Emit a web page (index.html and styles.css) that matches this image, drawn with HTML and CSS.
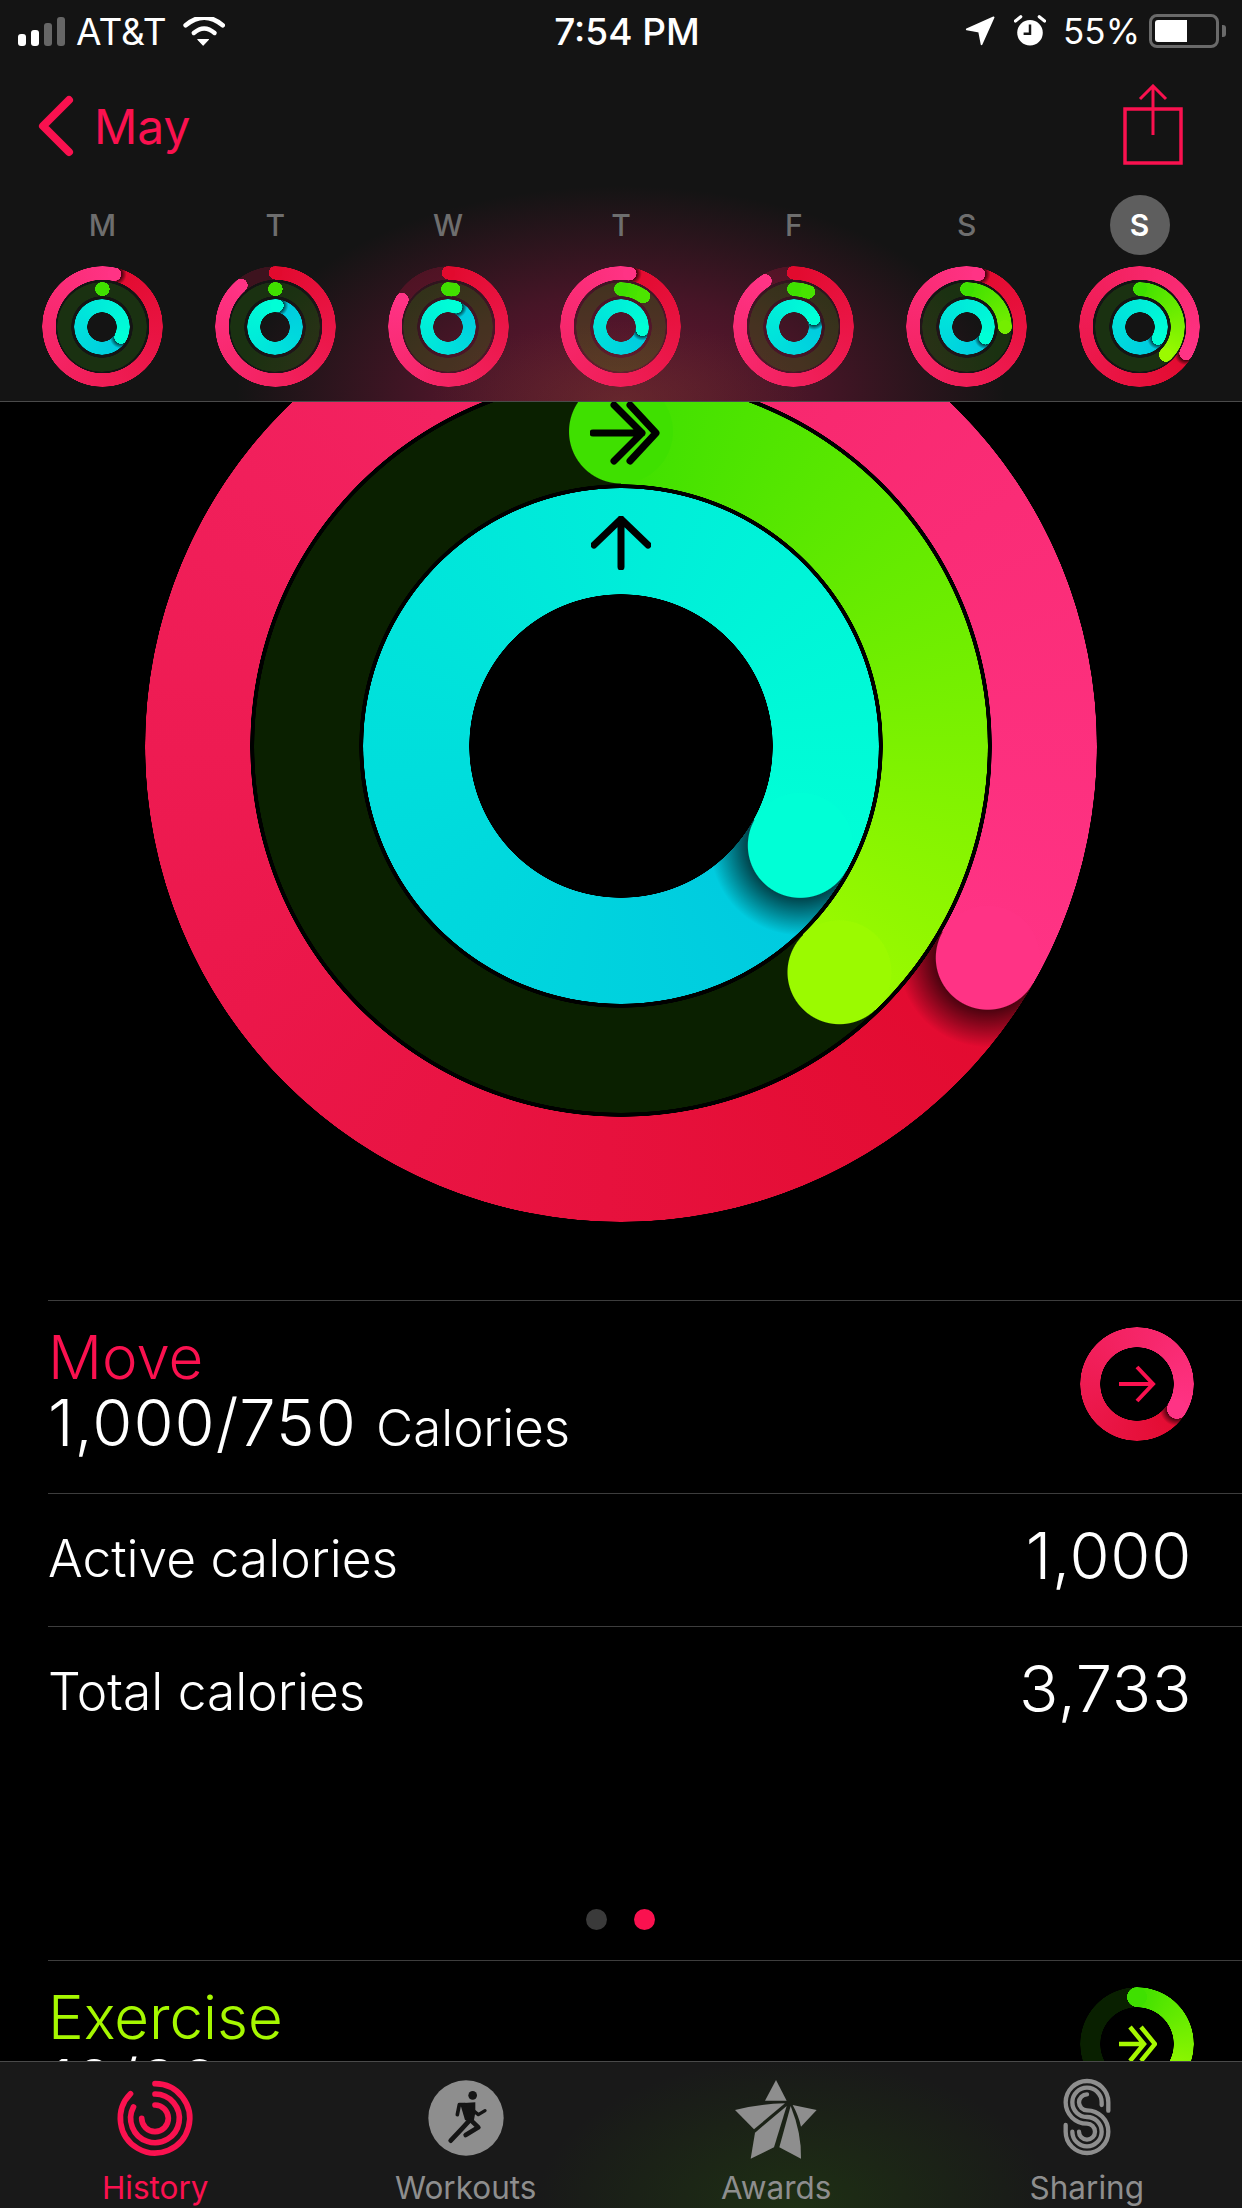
FILE: index.html
```html
<!DOCTYPE html>
<html lang="en">
<head>
  <meta charset="UTF-8">
  <meta name="viewport" content="width=device-width, initial-scale=1.0">
  <title>Activity</title>
  <link rel="stylesheet" href="styles.css">
</head>
<body>
<div class="phone">

  <header class="top">
    <div class="status">
      <div class="status-left">
        <svg class="signal" width="48" height="29" viewBox="0 0 48 29">
          <rect x="0" y="17" width="8" height="12" rx="3" fill="#fff"/>
          <rect x="13" y="13" width="8" height="16" rx="3" fill="#fff"/>
          <rect x="26" y="6" width="8" height="23" rx="3" fill="#666"/>
          <rect x="39" y="0" width="8" height="29" rx="3" fill="#666"/>
        </svg>
        <span>AT&amp;T</span>
        <svg class="wifi" width="42" height="29" viewBox="540 50 125 85">
          <path d="M548 74 Q603 28 658 74" fill="none" stroke="#fff" stroke-width="14" stroke-linecap="round"/>
          <path d="M572 97 Q603 70 634 97" fill="none" stroke="#fff" stroke-width="13" stroke-linecap="round"/>
          <path d="M584 116 H616 L600 133 Z" fill="#fff" stroke="#fff" stroke-width="3" stroke-linejoin="round"/>
        </svg>
      </div>
      <div class="status-time">7:54 PM</div>
      <div class="status-right">
        <svg width="30" height="30" viewBox="60 50 85 85">
          <path d="M65 88 L141 54 L107 130 L100 94 Z" fill="#fff" stroke="#fff" stroke-width="5" stroke-linejoin="round"/>
        </svg>
        <svg class="alarm" width="32" height="32" viewBox="205 45 90 90">
          <circle cx="250" cy="95" r="36" fill="#fff"/>
          <path d="M209 62 L224 50 M291 62 L276 50" stroke="#fff" stroke-width="9" stroke-linecap="round"/>
          <path d="M250 72 V98 H232" fill="none" stroke="#151515" stroke-width="7"/>
        </svg>
        <span class="pct">55%</span>
        <div class="battery"><div class="battery-fill"></div></div>
        <div class="battery-nub"></div>
      </div>
    </div>

    <nav class="nav">
      <div class="back">
        <svg width="37" height="62" viewBox="0 0 37 62">
          <path d="M32 5 L6 31 L32 57" fill="none" stroke="#fa114f" stroke-width="8" stroke-linecap="round" stroke-linejoin="round"/>
        </svg>
        <span>May</span>
      </div>
      <svg class="share" width="60" height="82" viewBox="0 0 60 82">
        <path d="M2 25 H58 V79 H2 Z" fill="none" stroke="#fa114f" stroke-width="3.5"/>
        <path d="M30 51 V2 M17 15 L30 2 L43 15" fill="none" stroke="#fa114f" stroke-width="3"/>
      </svg>
    </nav>

    <div class="week">
      <div class="day"><span class="letter">M</span>
        <div class="rings rings-sm">
          <div class="ring move lap" style="--a:13deg"></div>
          <div class="ring ex" style="--a:1deg;--c2:#40e000"></div>
          <div class="ring stand lap" style="--a:119deg"></div>
        </div>
      </div>
      <div class="day"><span class="letter">T</span>
        <div class="rings rings-sm">
          <div class="ring move" style="--a:320deg"></div>
          <div class="ring ex" style="--a:1deg;--c2:#40e000"></div>
          <div class="ring stand lap" style="--a:6deg"></div>
        </div>
      </div>
      <div class="day"><span class="letter">W</span>
        <div class="rings rings-sm">
          <div class="ring move" style="--a:300deg"></div>
          <div class="ring ex" style="--a:8deg;--c2:#42e000"></div>
          <div class="ring stand lap" style="--a:22deg"></div>
        </div>
      </div>
      <div class="day"><span class="letter">T</span>
        <div class="rings rings-sm">
          <div class="ring move lap" style="--a:10deg"></div>
          <div class="ring ex" style="--a:36deg;--c2:#4ce400"></div>
          <div class="ring stand lap" style="--a:97deg"></div>
        </div>
      </div>
      <div class="day"><span class="letter">F</span>
        <div class="rings rings-sm">
          <div class="ring move" style="--a:328deg"></div>
          <div class="ring ex" style="--a:22deg;--c2:#48e200"></div>
          <div class="ring stand lap" style="--a:68deg"></div>
        </div>
      </div>
      <div class="day"><span class="letter">S</span>
        <div class="rings rings-sm">
          <div class="ring move lap" style="--a:13deg"></div>
          <div class="ring ex" style="--a:90deg;--c2:#74ee00"></div>
          <div class="ring stand lap" style="--a:121deg"></div>
        </div>
      </div>
      <div class="day"><span class="letter today">S</span>
        <div class="rings rings-sm">
          <div class="ring move lap" style="--a:120deg"></div>
          <div class="ring ex" style="--a:137deg"></div>
          <div class="ring stand lap" style="--a:122deg"></div>
        </div>
      </div>
    </div>
  </header>

  <main class="content">
    <section class="hero">
      <div class="rings rings-lg">
        <div class="ring move lap" style="--a:120deg"></div>
        <div class="ring ex" style="--a:136deg"></div>
        <div class="ring stand lap" style="--a:119deg"></div>
        <svg class="arrow-ex" width="70" height="64" viewBox="0 0 70 64">
          <path d="M3 32 H52 M24 4 L52 32 L24 60 M40 4 L66 32 L40 60" fill="none" stroke="#000" stroke-width="7" stroke-linecap="round" stroke-linejoin="round"/>
        </svg>
        <svg class="arrow-stand" width="60" height="54" viewBox="0 0 60 54">
          <path d="M30 51 V3 M3 29 L30 3 L57 29" fill="none" stroke="#000" stroke-width="7" stroke-linecap="round" stroke-linejoin="round"/>
        </svg>
      </div>
    </section>

    <section class="stat">
      <div class="stat-text">
        <div class="stat-title title-move">Move</div>
        <div class="stat-value">1,000/750 <small>Calories</small></div>
      </div>
      <div class="rings rings-row">
        <div class="ring move lap" style="--a:122deg"></div>
        <svg class="arrow-row" width="40" height="40" viewBox="0 0 40 40">
          <path d="M2 20 H36 M20 3 L36 20 L20 37" fill="none" stroke="#fa114f" stroke-width="4"/>
        </svg>
      </div>
    </section>
    <div class="line"><span>Active calories</span><b>1,000</b></div>
    <div class="line"><span>Total calories</span><b>3,733</b></div>

    <div class="pager"><i></i><i class="on"></i></div>

    <section class="stat">
      <div class="stat-text">
        <div class="stat-title title-ex">Exercise</div>
        <div class="stat-value">12/30 <small>Minutes</small></div>
      </div>
      <div class="rings rings-row">
        <div class="ring ex" style="--a:136deg"></div>
        <svg class="arrow-row" width="40" height="40" viewBox="0 0 40 40">
          <path d="M2 20 H27 M13 3 L27 20 L13 37 M24 3 L38 20 L24 37" fill="none" stroke="#a6f800" stroke-width="4.5"/>
        </svg>
      </div>
    </section>
  </main>

  <footer class="tabs">
    <div class="tab tab-on">
      <svg viewBox="83 30 228 228">
        <g fill="none" stroke="#fa114f" stroke-width="17" stroke-linecap="round">
          <path d="M197 41 A104 104 0 1 1 123.5 71.5"/>
          <path d="M197 72 A73 73 0 1 1 132.5 110.8"/>
          <path d="M197 105 A40 40 0 1 1 157 145"/>
        </g>
      </svg>
      <span>History</span>
    </div>
    <div class="tab">
      <svg viewBox="54 30 228 228">
        <circle cx="168" cy="144" r="113" fill="#8e8e8e"/>
        <circle cx="188" cy="76" r="13" fill="#151515"/>
        <path d="M150 100 L196 97 L196 128 L190 160 L165 150 Z" fill="#151515"/>
        <g fill="none" stroke="#151515" stroke-linecap="round" stroke-linejoin="round">
          <path d="M165 104 H148 L142 134" stroke-width="11"/>
          <path d="M190 122 L205 134 L225 122" stroke-width="10"/>
          <path d="M178 152 L156 176 L122 212" stroke-width="14"/>
          <path d="M184 152 L205 172 L167 195" stroke-width="14"/>
        </g>
      </svg>
      <span>Workouts</span>
    </div>
    <div class="tab">
      <svg viewBox="54 30 228 228">
        <g fill="#8e8e8e">
          <path d="M168 30 L200 92 H135 Z"/>
          <path d="M45 120 Q110 102 195 100 L102 178 Z"/>
          <path d="M105 188 L200 108 L162 232 L92 266 Z"/>
          <path d="M212 108 L178 232 L243 266 Q245 190 212 108 Z"/>
          <path d="M218 105 L290 120 L243 170 Q235 135 218 105 Z"/>
        </g>
      </svg>
      <span>Awards</span>
    </div>
    <div class="tab">
      <svg viewBox="54 30 228 228">
        <g fill="none" stroke="#8e8e8e" stroke-width="13" stroke-linecap="round">
          <path d="M232 122 V97 A64 64 0 0 0 104 97 A64 64 0 0 0 168 161 A24 24 0 1 1 144 185"/>
          <path d="M212 105 V97 A44 44 0 0 0 124 97 A44 44 0 0 0 168 141 A44 44 0 1 1 124 185"/>
          <path d="M168 73 A24 24 0 0 0 168 121 A64 64 0 1 1 104 185 V165"/>
        </g>
      </svg>
      <span>Sharing</span>
    </div>
  </footer>

</div>
</body>
</html>
```

FILE: styles.css
```css
* { box-sizing: border-box; margin: 0; padding: 0; }
html, body { background: #000; }
body { font-family: Inter, "Liberation Sans", sans-serif; color: #fff; }

.phone { width: 1242px; height: 2208px; display: flex; flex-direction: column; overflow: hidden; background: #000; }

/* header */
.top {
  height: 402px; flex: none; border-bottom: 1px solid #4a4a4a;
  background:
    radial-gradient(ellipse 190px 80px at 50% 100%, rgba(90,70,30,.35), rgba(90,70,30,0)),
    radial-gradient(ellipse 385px 215px at 50% 100%, rgba(112,22,54,.95), rgba(112,22,54,.55) 50%, rgba(112,22,54,0)),
    #141414;
}
.status { height: 62px; padding: 0 16px 0 18px; display: grid; grid-template-columns: 1fr auto 1fr; align-items: center; font-size: 37px; }
.status-left, .status-right { display: flex; align-items: center; }
.status-left span { margin-left: 10px; }
.wifi { margin-left: 16px; }
.status-time { font-weight: 500; margin-left: 10px; }
.status-right { justify-content: flex-end; }
.alarm { margin-left: 19px; }
.pct { font-size: 35px; margin-left: 17px; margin-right: 9px; }
.battery { width: 70px; height: 34px; border: 3px solid #6a6a6a; border-radius: 8px; padding: 3px; }
.battery-fill { width: 32px; height: 100%; background: #fff; border-radius: 3px 0 0 3px; }
.battery-nub { width: 4px; height: 12px; background: #6a6a6a; margin-left: 3px; border-radius: 0 3px 3px 0; }

.nav { height: 128px; padding: 0 59px 0 37px; display: flex; justify-content: space-between; align-items: center; color: #fa114f; }
.back { display: flex; align-items: center; gap: 20px; font-size: 48px; }
.share { margin-top: -2px; }

.week { display: grid; grid-template-columns: repeat(7, 1fr); padding: 5px 16px 0; }
.day { display: flex; flex-direction: column; align-items: center; gap: 11px; }
.letter { width: 60px; height: 60px; border-radius: 50%; display: flex; align-items: center; justify-content: center; font-size: 30px; font-weight: 500; color: #6e6e6e; }
.today { background: #5e5e5e; color: #fff; font-weight: 600; }

/* activity rings */
.rings { position: relative; flex: none; width: var(--size); height: var(--size); }
.ring {
  --from: 0deg; --sweep: var(--a); --cap: var(--c1); --sh: 0;
  position: absolute; left: calc(50% - var(--r)); top: calc(50% - var(--r));
  width: calc(var(--r) * 2); height: calc(var(--r) * 2);
}
.ring.lap { --from: var(--a); --sweep: 360deg; --cap: transparent; --sh: .65; }
.ring::before, .ring::after {
  content: ''; position: absolute; inset: 0; border-radius: 50%;
  -webkit-mask: radial-gradient(circle closest-side, transparent calc(var(--r) - var(--w) - .5px), #000 calc(var(--r) - var(--w)), #000 calc(var(--r) - .5px), transparent var(--r));
  mask: radial-gradient(circle closest-side, transparent calc(var(--r) - var(--w) - .5px), #000 calc(var(--r) - var(--w)), #000 calc(var(--r) - .5px), transparent var(--r));
}
.ring::before {
  background:
    radial-gradient(circle calc(var(--w) / 2) at 50% calc(var(--w) / 2), var(--cap) 98%, transparent 100%),
    conic-gradient(from var(--from), var(--c1), var(--c2) var(--sweep), transparent 0),
    var(--track);
}
/* head of the arc, shadow only ahead of it */
.ring::after {
  transform: rotate(var(--a));
  background:
    radial-gradient(circle calc(var(--w) / 2) at 50% calc(var(--w) / 2), var(--c2) 98%, transparent 100%),
    radial-gradient(circle calc(var(--w) * .85) at 0 calc(var(--w) / 2), rgba(0,0,0,var(--sh)) 59%, transparent 100%);
  background-size: 100% 100%, 50% 100%;
  background-position: 0 0, 100% 0;
  background-repeat: no-repeat;
}
.move { --c1: #e20a2e; --c2: #ff3385; --track: rgba(250,17,79,.18); --r: var(--r1); --w: var(--w1); }
.ex { --c1: #3fe000; --c2: #9bfa00; --track: rgba(64,224,0,.14); --r: var(--r2); --w: var(--w2); }
.stand { --c1: #00c8e0; --c2: #00ffd6; --track: rgba(0,220,220,.14); --r: var(--r3); --w: var(--w3); }

.rings-sm { --size: 121px; --r1: 60.5px; --w1: 13.5px; --r2: 45px; --w2: 14px; --r3: 28px; --w3: 13px; }
.rings-lg { --size: 952px; --r1: 476px; --w1: 105px; --r2: 367px; --w2: 105px; --r3: 258px; --w3: 106px; }
.rings-row { --size: 114px; --r1: 57px; --w1: 20px; --r2: 57px; --w2: 20px; }
.rings-lg .ex { --track: #0a2000; }

.arrow-ex { position: absolute; left: 445px; top: 131px; }
.arrow-stand { position: absolute; left: 446px; top: 246px; }
.arrow-row { position: absolute; left: 37px; top: 37px; }

/* content */
.content { flex: 1; min-height: 0; overflow: hidden; }
.hero { height: 898px; display: flex; justify-content: center; }
.rings-lg { margin-top: -132px; }

.stat { margin-left: 48px; padding: 26px 48px 0 0; height: 193px; border-top: 1px solid #3d3d3d; display: flex; justify-content: space-between; align-items: flex-start; }
.stat-title { font-size: 60px; line-height: 60px; font-weight: 300; }
.title-move { color: #fa114f; }
.title-ex { color: #a6f800; }
.stat-value { font-size: 65px; line-height: 70px; font-weight: 300; letter-spacing: 1px; margin-top: 1px; }
.stat-value small { font-size: 51px; font-weight: 300; letter-spacing: 0; }

.line { margin-left: 48px; padding: 0 50px 5px 0; height: 133px; border-top: 1px solid #3d3d3d; display: flex; justify-content: space-between; align-items: center; font-size: 51.5px; font-weight: 300; }
.line b { font-size: 65px; font-weight: 300; margin-top: -4px; letter-spacing: .7px; }

.pager { height: 201px; padding: 0 2px 30px 0; display: flex; justify-content: center; align-items: flex-end; gap: 27px; }
.pager i { width: 21px; height: 21px; border-radius: 50%; background: #3a3a3a; }
.pager i.on { background: #fa114f; }

/* tab bar */
.tabs {
  height: 147px; flex: none; border-top: 1px solid #4a4a4a; display: grid; grid-template-columns: repeat(4, 1fr);
  background: radial-gradient(ellipse 260px 150px at 64% 100%, rgba(40,90,10,.35), rgba(40,90,10,0)), #191919;
}
.tab { display: flex; flex-direction: column; align-items: center; padding-top: 18px; color: #8e8e8e; font-size: 31.5px; }
.tab svg { width: 76px; height: 76px; flex: none; overflow: visible; }
.tab span { margin-top: 12px; }
.tab-on { color: #fa114f; }
```
